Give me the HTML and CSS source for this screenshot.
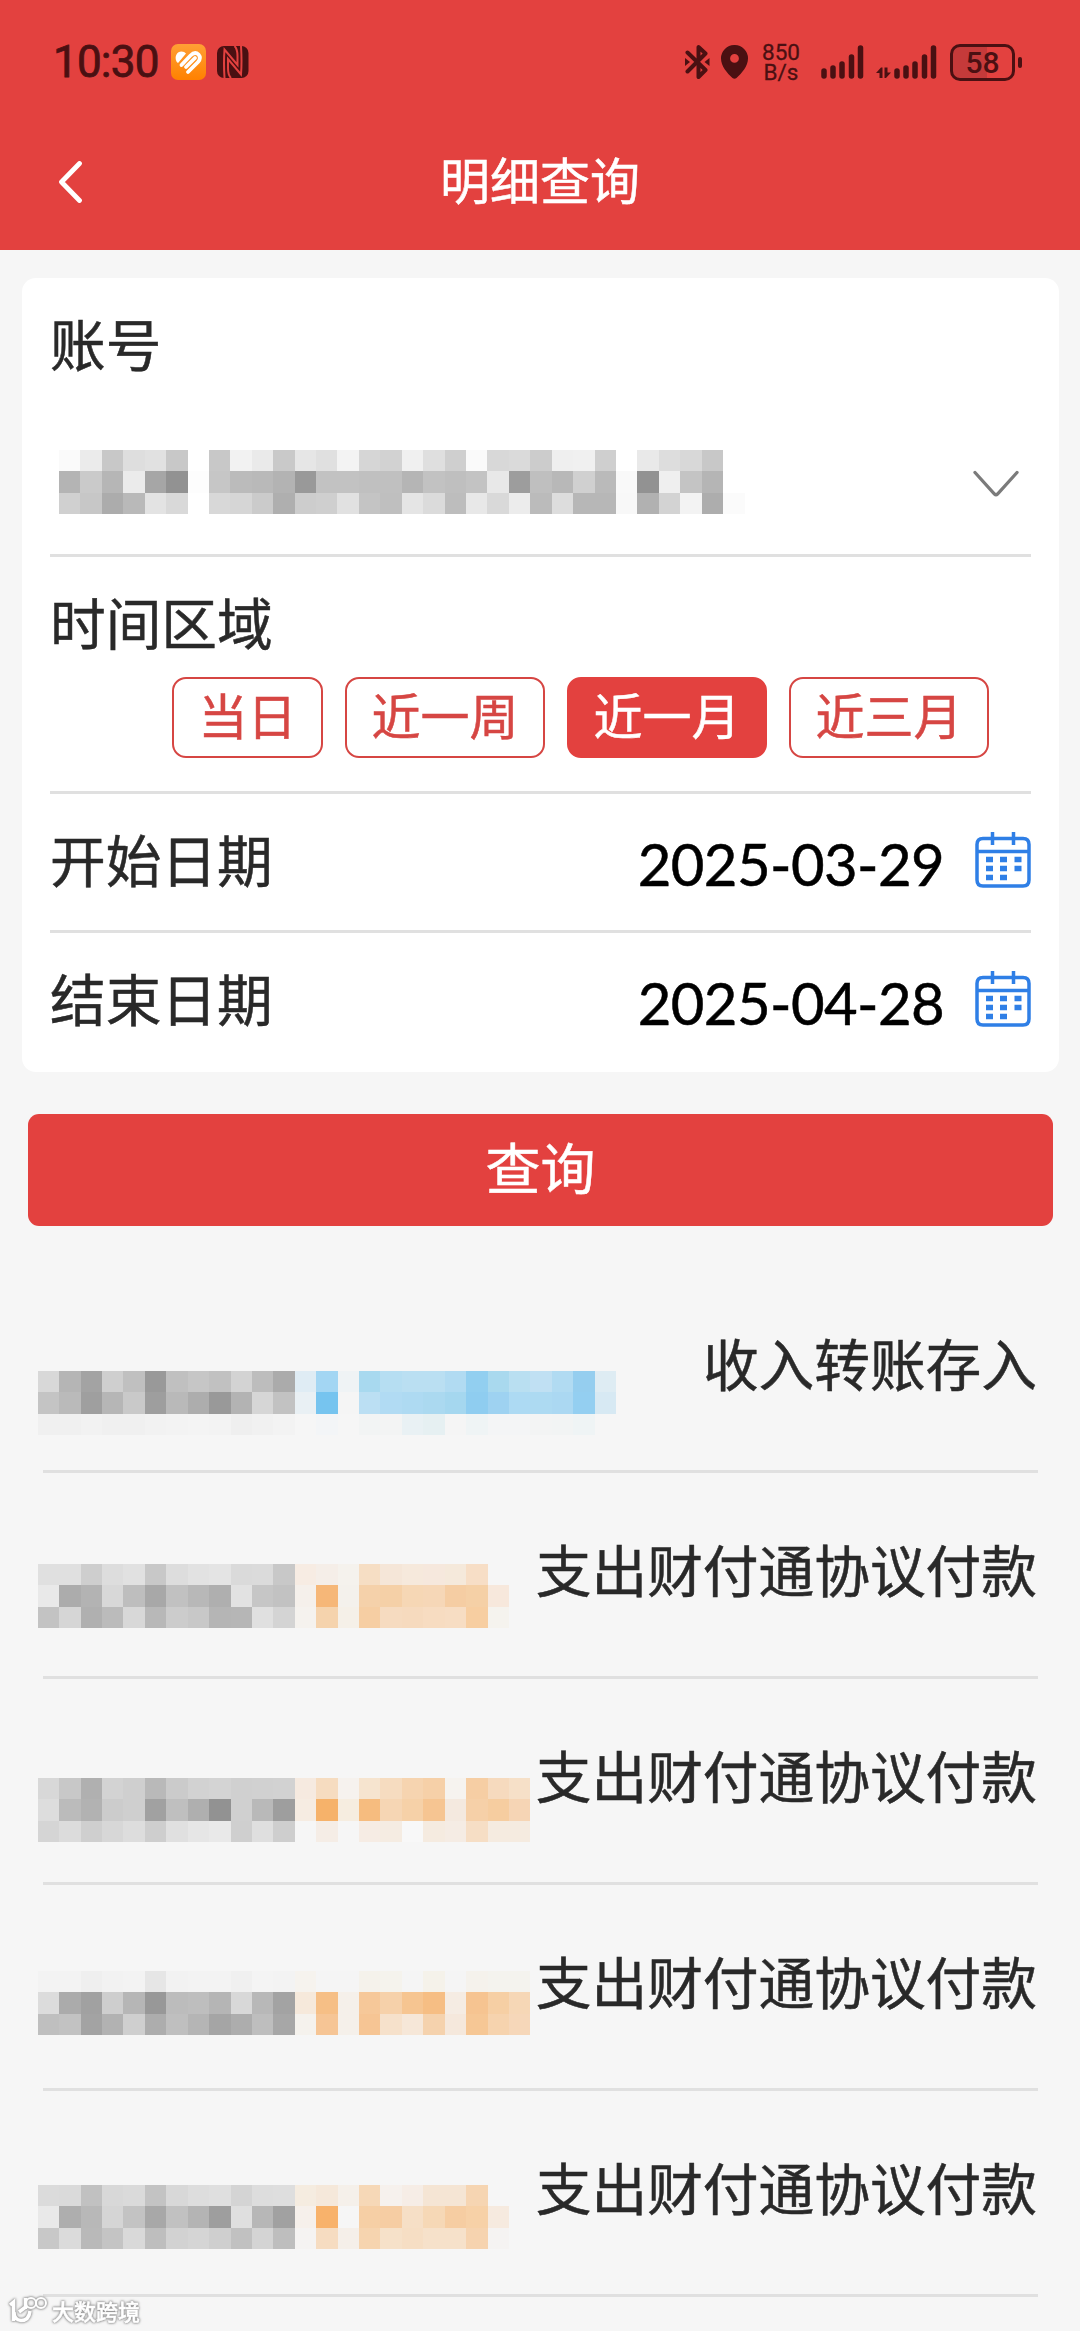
FILE: index.html
```html
<!DOCTYPE html>
<html lang="zh-CN">
  <head>
    <meta charset="utf-8" />
    <meta name="viewport" content="width=device-width, initial-scale=1" />
    <link rel="stylesheet" href="styles.css">
    <title>明细查询</title>
  </head>
  <body>
    <header class="header">
      <div class="status-bar">
        <div class="status-left">
          <span class="clock">10:30</span>
          <svg class="app-icon" width="35" height="36" viewBox="0 0 35 36">
            <defs>
              <linearGradient id="orange" x1="0" y1="0" x2="0" y2="1">
                <stop offset="0" stop-color="#ff9f35" />
                <stop offset="1" stop-color="#ff8100" />
              </linearGradient>
            </defs>
            <rect width="35" height="36" rx="7" fill="url(#orange)" />
            <path d="M5.5 17.5C3 12.500 6 7.500 10.500 7.500Q13.500 7.500 15 9.500L7.500 18.500Q6.500 19.500 5.500 17.500Z" fill="#fff" />
            <path d="M10.500 21L19.500 11.500Q24 7 27.500 10.500Q30.500 14 27 18L17 28M15 23L24 14" fill="none" stroke="#fff" stroke-width="3.800" stroke-linecap="round" />
          </svg>
          <svg class="nfc" width="32" height="32" viewBox="0 0 32 32">
            <rect width="31.500" height="32" rx="7" fill="#4a1012" />
            <path d="M7.500 32Q6.500 16 7.500 3.500L20.500 19V10Q20.500 3 17.500 0M24 0Q25 16 24 28.500L11 13V22Q11 29 14 32" fill="none" stroke="#e3413f" stroke-width="2" />
          </svg>
        </div>
        <div class="status-right">
          <svg width="25" height="36" viewBox="0 0 25 36">
            <path d="M2.500 8.500L20.500 26L13.500 33V22M2.500 27.500L20.500 9.500L13.500 3V14" fill="none" stroke="#4a1012" stroke-width="4" stroke-linejoin="round" stroke-linecap="round" />
            <path d="M0 14L5 18L0 22ZM24.500 14L19.500 18L24.500 22Z" fill="#4a1012" />
          </svg>
          <svg class="pin" width="27" height="34" viewBox="0 0 27 34">
            <path d="M13.500 0A13.300 13.300 0 0 0 0 13.500C0 21 6 28 11.500 33Q13.500 34.500 15.500 33C21 28 27 21 27 13.500A13.300 13.300 0 0 0 13.500 0ZM13.500 9A4.400 4.400 0 1 1 13.500 17.800A4.400 4.400 0 1 1 13.500 9Z" fill="#4a1012" />
          </svg>
          <div class="speed"><span>850</span><span>B/s</span></div>
          <svg class="signal" width="43" height="34" viewBox="0 0 43 34">
            <path d="M3 26V31M12 23V31M21 19V31M30.500 12V31M39.500 3V31" stroke="#4a1012" stroke-width="5.500" stroke-linecap="round" />
          </svg>
          <svg class="signal-data" width="61" height="34" viewBox="0 0 61 34">
            <path d="M21 26V31M30 23V31M39 19V31M48.500 12V31M57.500 3V31" stroke="#4a1012" stroke-width="5.500" stroke-linecap="round" />
            <path d="M0 28L5 22.500H6.500V33H3.500V28ZM8.500 22.500H11.500V27.500H15L10 33H8.500Z" fill="#4a1012" />
          </svg>
          <div class="battery"><span>58</span></div>
          <i class="battery-tip"></i>
        </div>
      </div>
      <div class="nav-bar">
        <svg class="back" width="26" height="42" viewBox="0 0 26 42">
          <path d="M22.500 2.500L4.500 21L22.500 39.500" fill="none" stroke="#fff" stroke-width="4.800" stroke-linecap="round" stroke-linejoin="round" />
        </svg>
        <h1>明细查询</h1>
      </div>
    </header>

    <main>
      <section class="card">
        <div class="account">
          <div class="label">账号</div>
          <div class="account-select">
            <div class="mosaic" data-mask="account"></div>
            <svg width="46" height="28" viewBox="0 0 46 28">
              <path d="M2 2.500L21.500 24Q23 25.500 24.500 24L44 2.500" fill="none" stroke="#7b7b7b" stroke-width="3.300" stroke-linecap="round" />
            </svg>
          </div>
        </div>
        <div class="range">
          <div class="label">时间区域</div>
          <div class="range-buttons">
            <button>当日</button>
            <button>近一周</button>
            <button class="active">近一月</button>
            <button>近三月</button>
          </div>
        </div>
        <div class="date-row">
          <div class="label">开始日期</div>
          <span class="date">2025-03-29</span>
          <svg class="calendar" width="56" height="57" viewBox="0 0 56 57">
            <path d="M8 6.500H48Q54 6.500 54 12.500V48Q54 54 48 54H8Q2 54 2 48V12.500Q2 6.500 8 6.500ZM2 19.500H54M17.500 0V13M38.500 0V13" fill="none" stroke="#2f7fe6" stroke-width="3.500" />
            <path d="M11 27.500H18M25 27.500H32M39.500 27.500H46.500M11 36.500H18M25 36.500H32M39.500 36.500H46.500M11 45.500H18M25 45.500H32" stroke="#2f7fe6" stroke-width="5.500" />
          </svg>
        </div>
        <div class="date-row">
          <div class="label">结束日期</div>
          <span class="date">2025-04-28</span>
          <svg class="calendar" width="56" height="57" viewBox="0 0 56 57">
            <path d="M8 6.500H48Q54 6.500 54 12.500V48Q54 54 48 54H8Q2 54 2 48V12.500Q2 6.500 8 6.500ZM2 19.500H54M17.500 0V13M38.500 0V13" fill="none" stroke="#2f7fe6" stroke-width="3.500" />
            <path d="M11 27.500H18M25 27.500H32M39.500 27.500H46.500M11 36.500H18M25 36.500H32M39.500 36.500H46.500M11 45.500H18M25 45.500H32" stroke="#2f7fe6" stroke-width="5.500" />
          </svg>
        </div>
      </section>

      <button class="submit">查询</button>

      <ul class="records">
        <li><div class="mosaic" data-mask="r1"></div><span>收入转账存入</span></li>
        <li><div class="mosaic" data-mask="r2"></div><span>支出财付通协议付款</span></li>
        <li><div class="mosaic" data-mask="r3"></div><span>支出财付通协议付款</span></li>
        <li><div class="mosaic" data-mask="r4"></div><span>支出财付通协议付款</span></li>
        <li><div class="mosaic" data-mask="r5"></div><span>支出财付通协议付款</span></li>
      </ul>
    </main>

    <div class="watermark">
      <svg width="40" height="30" viewBox="0 0 40 30">
        <path d="M2 10L5.500 7V26M22 16Q21 25.500 13 25.500Q6 25 6 17M11 17L19 11M17.500 3V14" fill="none" stroke="#fff" stroke-width="3.500" />
        <circle cx="23" cy="8" r="5" fill="none" stroke="#fff" stroke-width="2" />
        <circle cx="33" cy="8" r="5" fill="none" stroke="#fff" stroke-width="2" />
      </svg>
      <span>大数跨境</span>
    </div>
    <script src="script.js"></script>
  </body>
</html>
```

FILE: styles.css
```css
* {
  box-sizing: border-box;
}
body {
  margin: 0;
  height: 2331px;
  overflow: hidden;
  position: relative;
  background-color: #f6f6f6;
  color: #292929;
  font-family: "Noto Sans CJK SC", sans-serif;
  -webkit-text-stroke: 0.5px;
}
h1 {
  margin: 0;
}
svg {
  display: block;
  flex-shrink: 0;
}
button {
  margin: 0;
  padding: 0;
  font-family: inherit;
  -webkit-text-stroke: 0.5px;
}

.header {
  height: 250px;
  background-color: #e3413f;
}
.status-bar {
  display: flex;
  justify-content: space-between;
  height: 124px;
  padding: 0 58px 0 53px;
  color: #4a1012;
  font-family: Roboto, sans-serif;
  -webkit-text-stroke: 0;
}
.status-left,
.status-right {
  display: flex;
  align-items: center;
}
.clock {
  width: 118px;
  font-size: 44px;
  letter-spacing: -0.800px;
  white-space: nowrap;
  -webkit-text-stroke: 0.800px;
}
.nfc {
  margin-left: 11px;
}
.pin {
  margin-left: 11px;
}
.speed {
  display: flex;
  flex-direction: column;
  align-items: center;
  width: 38px;
  margin-left: 14px;
  font-size: 22.500px;
  line-height: 20px;
  -webkit-text-stroke: 0.300px;
}
.signal {
  margin-left: 21px;
}
.signal-data {
  margin-left: 12px;
}
.battery {
  width: 65px;
  height: 37px;
  margin-left: 13px;
  border: 3px solid #4a1012;
  border-radius: 10px;
  background: linear-gradient(to right, #c53a3a 58%, transparent 58%);
  font-size: 30px;
  font-weight: 500;
  line-height: 32px;
  text-align: center;
}
.battery-tip {
  width: 4px;
  height: 11px;
  margin-left: 3px;
  border-radius: 2px;
  background-color: #4a1012;
}

.nav-bar {
  display: flex;
  align-items: center;
  height: 115px;
  padding: 0 56px 0 57px;
  color: #fff;
}
.nav-bar h1 {
  flex: 1;
  padding: 0 27px 7px 0;
  font-size: 50px;
  font-weight: 400;
  line-height: 60px;
  text-align: center;
}

.card {
  margin: 28px 21px 0 22px;
  height: 794px;
  padding: 0 28px;
  border-radius: 14px;
  background-color: #fff;
}
.label {
  padding-bottom: 4px;
  font-size: 55.700px;
  line-height: 60px;
}
.account {
  height: 279px;
  padding-top: 34px;
  border-bottom: 3px solid #e0e0e0;
}
.account-select {
  display: flex;
  align-items: flex-start;
  justify-content: space-between;
  margin-top: 74px;
  padding: 0 12px 0 9px;
}
.account-select svg {
  margin-top: 20px;
}
.range {
  height: 237px;
  padding-top: 34px;
  border-bottom: 3px solid #e0e0e0;
}
.range-buttons {
  display: flex;
  justify-content: flex-end;
  gap: 22px;
  margin-top: 22px;
  padding-right: 42px;
}
.range-buttons button {
  height: 81px;
  padding: 0 24.500px 7px;
  border: 2px solid #d64643;
  border-radius: 14px;
  background-color: #fff;
  color: #d64643;
  font-size: 49px;
  line-height: 68px;
}
.range-buttons .active {
  border-color: #e3413f;
  background-color: #e3413f;
  color: #fff;
}
.date-row {
  display: flex;
  align-items: center;
  height: 136px;
  padding-bottom: 4px;
}
.date-row + .date-row {
  height: 139px;
  border-top: 3px solid #e0e0e0;
}
.date {
  margin-left: auto;
  padding-top: 7px;
  color: #000;
  font-family: Lato, sans-serif;
  font-size: 58px;
  letter-spacing: -0.600px;
  line-height: 70px;
}
.calendar {
  margin-left: 31px;
}

.submit {
  display: block;
  width: 1025px;
  height: 112px;
  margin: 42px 0 0 28px;
  padding-bottom: 10px;
  border: none;
  border-radius: 11px;
  background-color: #e3413f;
  color: #fff;
  font-size: 55px;
}

.records {
  margin: 41px 42px 0 43px;
  padding: 0;
  list-style: none;
}
.records li {
  display: flex;
  align-items: flex-start;
  justify-content: space-between;
  height: 206px;
  border-bottom: 3px solid #e0e0e0;
}
.records span {
  padding: 65px 1px 0 0;
  font-size: 55.700px;
  line-height: 60px;
  white-space: nowrap;
}
.records .mosaic {
  margin-left: -5.300px;
}

/* masked digits */
.mosaic {
  display: grid;
  grid-auto-rows: 21.400px;
}

.watermark {
  position: absolute;
  left: 8px;
  bottom: 6px;
  display: flex;
  align-items: center;
  gap: 4px;
  color: #fff;
  font-size: 22px;
  font-weight: 500;
  line-height: 30px;
  filter: drop-shadow(0 0 1px #888) drop-shadow(0 0 1px #aaa);
}
```

FILE: script.js
```js
// two-digit tokens are greys, six-digit tokens are full colours
const masks = {
  account: {
    top: 0,
    rows: [
      "fa eb c8 de e1 c8 ff c8 f2 ea c9 e6 e0 f3 d6 d2 f0 df cf fa d8 da cc ef f0 cf ff e9 dd d8 c8 ff",
      "b4 ca b6 eb a6 92 fd c6 bb b9 b3 99 c2 c2 c0 c0 b5 c2 bf c3 e8 9d bf b8 d0 ba f9 92 ef c4 b5 ff",
      "d0 c7 ac b9 e3 d9 ff d8 d6 cb af cd cf e1 c4 bf e5 db bd e8 d9 ec bb dd b7 b7 f8 b1 d3 f3 ad fb",
    ],
  },
  r1: {
    top: 104,
    rows: [
      "d8 b5 a3 cf c0 99 c0 c6 c1 d3 bd ab dfecf4 a3d6f3 eff3f5 a8d9ef b6def2 badff2 badff2 b1dbf2 92cff0 a9d9ee b9dff1 c0e0f3 b1dbf2 95ceef deecf3",
      "c4 ba 9f b6 c9 9e b9 ad 99 b3 d6 c2 e9f0f4 76c4ef f5 bbdff3 b1dbf3 aedaf2 abd9f0 a5d7ef 8fcdf0 9ed2f1 addaf3 addaf2 abd8f2 94cff1 d7e9f3",
      "f0 f0 f2 f0 f0 f2 f3 f4 f3 ef f1 f3 f6 f3f5f7 f6 f2f4f4 f3f4f4 e9f1f4 e6f0f2 f5 eff4f5 f4f5f6 f4f5f6 f3f4f4 f2f4f4 eff4f5 f6",
    ],
  },
  r2: {
    top: 91,
    rows: [
      "e0 e0 ce dd e1 c8 dd e2 e4 da db c8 f7ece3 f5eee8 f5f2ed f6dec4 f5e6d8 f6e9dc f6e8dd f5e9db f7dec6 f6",
      "e9 ac b3 d8 be a8 c1 b8 af e2 c6 c2 f5f0eb f6b778 f4f1ec f5d1aa f5d0a7 f6d7b5 f6d7b7 f5cda3 f5d0a6 f7e8dc",
      "c3 d6 b0 bb d8 b8 cc c8 b5 b6 e0 d4 f5f2ee f5d3ad f5f0e8 f6cea3 f6dbc0 f6dabe f7dcc1 f7ddc3 f7cea1 f5f3ee",
    ],
  },
  r3: {
    top: 99,
    rows: [
      "d8 c8 b0 d3 cf b9 cb d2 d4 d0 d1 d2 f6eae0 f6dcc0 f6f2ee f6e4cf f6dcc0 f6d4b0 f6d0a8 f6f3ef f6cea4 f6dabe f6e0c8",
      "dd bb b2 cc cf a1 bf af 92 d0 b9 9e f6ece2 f6b26a f6ede0 f6bc7f f6d6b4 f6d1a8 f6c592 f4e9df f6d0a8 f6cda0 f6d5b5",
      "d5 dc cf d7 dd ce e0 e6 e9 cf df ce f6 f5ede6 f6 f6ece4 f5ece2 f8 f5ebe0 f5ece4 f6dec5 f5ebe0 f5ebe0",
    ],
  },
  r4: {
    top: 86,
    rows: [
      "f3 f3 ef f2 f3 e6 f2 f3 f3 f0 f4 f3 f6f3ee f5 f5 f5f2eb f5f3ed f5 f5f2ea f5 f5f2ec f4f3ee f4f3ee",
      "dc ab a1 ce b6 98 bc be b5 d8 b8 a3 f6e9db f6bf86 f5f0ea f6c899 f6d1aa f6c591 f6be84 f5ece3 f6c491 f6cfa4 f6d7b6",
      "bf c2 a3 b2 cf ad bf b5 a5 ad be a7 f5f2ed f6c595 f5f0ea f6c594 f6e1cb f6e7d8 f5d2ad f5e8dc f6c795 f6d3ae f6d7b9",
    ],
  },
  r5: {
    top: 94,
    rows: [
      "db da c1 d8 da c3 d8 dd df d4 dd de f5ece0 f5e8da f5f0ea f6d8b7 f6f1ed f6ede6 f5e5d4 f5e5d4 f6d5b2 f6",
      "e9 ae b8 d5 c3 a8 c1 b4 9e df b7 a1 f6f0eb f8b26b f6 f6cfa5 f6cda3 f6dfc6 f6d8b6 f6cda2 f7d1a7 f6eadf",
      "c8 db b9 c4 d9 be d2 d5 cf c1 d4 be f5f3f2 f6dcc1 f5efe9 f6d4af f6e1c9 f6dec4 f6e1ca f6e1ca f6d3af f5f3f2",
    ],
  },
};

document.querySelectorAll(".mosaic").forEach(el => {
  const mask = masks[el.dataset.mask];
  const rows = mask.rows.map(row => row.split(" "));
  el.style.gridTemplateColumns = `repeat(${rows[0].length}, 21.43px)`;
  el.style.marginTop = mask.top + "px";
  rows.flat().forEach(c => {
    const cell = document.createElement("i");
    cell.style.backgroundColor = "#" + (c.length === 2 ? c + c + c : c);
    el.appendChild(cell);
  });
});
```
